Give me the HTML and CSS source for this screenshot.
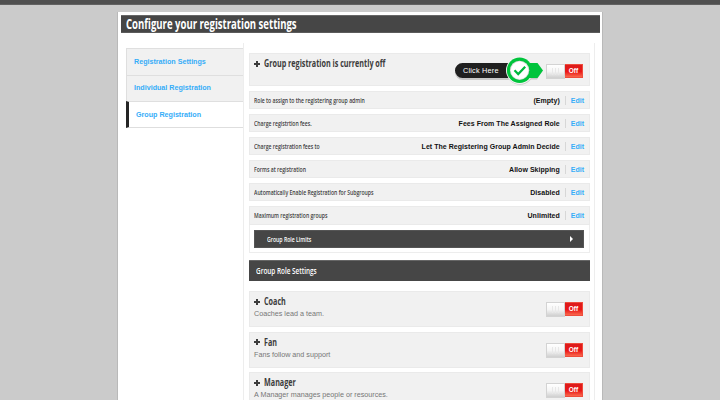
FILE: index.html
```html
<!DOCTYPE html>
<html lang="en">
<head>
<meta charset="utf-8">
<title>Configure your registration settings</title>
<link rel="stylesheet" href="styles.css">
</head>
<body>
<div class="topbar"></div>
<main class="panel">
  <h1 class="title"><span class="narrow">Configure your registration settings</span></h1>
  <div class="columns">
    <nav class="sidebar">
      <a class="tab">Registration Settings</a>
      <a class="tab">Individual Registration</a>
      <a class="tab active">Group Registration</a>
    </nav>
    <section class="content">
      <div class="card status">
        <h2 class="heading"><i class="plus"></i><span class="narrow">Group registration is currently off</span></h2>
        <div class="toggle"><span class="knob"><i></i><i></i><i></i></span><span class="off">Off</span></div>
        <div class="callout">
          <svg width="94" height="32" viewBox="0 0 94 32">
            <g fill="#c8c8c8"><rect x="2" y="9.500" width="60" height="15.500" rx="7.750"/><path d="M66 9h18l5.500 6.500-5.500 9H66z"/><circle cx="67" cy="16.200" r="13.600"/></g>
            <path d="M9.500 8h50v15h-50a7.500 7.500 0 0 1 0-15z" fill="#202020"/>
            <path d="M68 8h16.500l5.500 7.500-5.500 7.500H68z" fill="#00c43c"/>
            <circle cx="66.600" cy="15.300" r="13.600" fill="#f7f7f7"/>
            <path d="M76 8h8v15h-8z" fill="#00c43c"/>
            <circle cx="66.600" cy="15.300" r="12.700" fill="#00c43c"/>
            <circle cx="66.600" cy="15.300" r="9.600" fill="#dedede"/>
            <circle cx="66.600" cy="15.300" r="8.700" fill="#fff"/>
            <path d="M61.500 15.300l3.700 3.800 7-7.400" fill="none" stroke="#00b83c" stroke-width="2.200"/>
          </svg>
          <span class="callout-text">Click Here</span>
        </div>
      </div>
      <div class="card row"><span class="label">Role to assign to the registering group admin</span><b>(Empty)</b><a class="edit">Edit</a></div>
      <div class="card row"><span class="label">Charge registrtion fees.</span><b>Fees From The Assigned Role</b><a class="edit">Edit</a></div>
      <div class="card row"><span class="label">Charge registration fees to</span><b>Let The Registering Group Admin Decide</b><a class="edit">Edit</a></div>
      <div class="card row"><span class="label">Forms at registration</span><b>Allow Skipping</b><a class="edit">Edit</a></div>
      <div class="card row"><span class="label">Automatically Enable Registration for Subgroups</span><b>Disabled</b><a class="edit">Edit</a></div>
      <div class="card row last"><span class="label">Maximum registration groups</span><b>Unlimited</b><a class="edit">Edit</a></div>
      <div class="limits"><div class="limits-bar"><span class="narrow">Group Role Limits</span><i class="arrow"></i></div></div>
      <h2 class="section"><span class="narrow">Group Role Settings</span></h2>
      <div class="card role">
        <div><h3 class="heading"><i class="plus"></i><span class="narrow">Coach</span></h3><p>Coaches lead a team.</p></div>
        <div class="toggle"><span class="knob"><i></i><i></i><i></i></span><span class="off">Off</span></div>
      </div>
      <div class="card role">
        <div><h3 class="heading"><i class="plus"></i><span class="narrow">Fan</span></h3><p>Fans follow and support</p></div>
        <div class="toggle"><span class="knob"><i></i><i></i><i></i></span><span class="off">Off</span></div>
      </div>
      <div class="card role cut">
        <div><h3 class="heading"><i class="plus"></i><span class="narrow">Manager</span></h3><p>A Manager manages people or resources.</p></div>
        <div class="toggle"><span class="knob"><i></i><i></i><i></i></span><span class="off">Off</span></div>
      </div>
    </section>
  </div>
</main>
</body>
</html>
```
FILE: styles.css
```css
* { box-sizing: border-box; }
html, body { height: 400px; overflow: hidden; }
body { margin: 0; background: #cbcbcb; font: 7px/1 "Liberation Sans", Arial, sans-serif; color: #111; }
h1, h2, h3, p { margin: 0; font-weight: normal; }
.topbar { height: 5px; background: #505050; border-bottom: 1px solid #626262; }
.panel { width: 484px; height: 388px; margin: 7px 0 0 118px; padding: 3px 2px 0 3px; background: #fff; box-shadow: -1px 0 #b9b9b9, 1px 0 #b9b9b9; }
.narrow, .label { display: inline-block; white-space: nowrap; font-family: "Open Sans", "Noto Sans", sans-serif; font-weight: 700; transform-origin: 0 50%; }
.title { height: 18px; padding-left: 5px; background: #464646; border-top: 1px solid #666; border-bottom: 1px solid #5b5b5b; color: #fff; line-height: 16px; }
.title .narrow { font-size: 13.500px; transform: scaleX(.708); }
.columns { display: flex; margin: 10px 4px 0 5px; }
.sidebar { width: 117px; height: 110px; padding-top: 5px; flex: none; }
.tab { display: flex; align-items: center; height: 26.500px; padding: 1px 0 0 7px; background: #f1f1f1; border: solid #dfdfdf; border-width: 1px 0 0 1px; color: #35adf8; font-weight: bold; font-size: 7.150px; }
.tab.active { background: #fff; border-left: 3px solid #252525; border-bottom: 1px solid #dedede; height: 27px; padding-top: 2px; }
.content { width: 352px; height: 357px; padding: 10px 4px 0 5px; border: solid #ededed; border-width: 0 1px 0 1px; }
.card { position: relative; display: flex; background: #f1f1f1; border: 1px solid #eaeaea; margin-bottom: 5px; width: 341px; }
.status { height: 33px; padding: 3px 6px 0 4px; justify-content: space-between; }
.heading { display: flex; align-items: center; height: 12px; color: #3c3c3c; }
.heading .narrow { font-size: 10.500px; line-height: 12px; transform: scaleX(.685); }
.plus { width: 6px; height: 6px; margin: 1px 4px 0 0; background: linear-gradient(#3c3c3c, #3c3c3c) 50% 50% / 6px 2px no-repeat, linear-gradient(#3c3c3c, #3c3c3c) 50% 50% / 2px 6px no-repeat; }
.toggle { display: flex; width: 37px; height: 15px; margin-top: 7px; flex: none; }
.knob { display: flex; gap: 2px; justify-content: center; align-items: center; width: 19px; border: 1px solid #d3d3d3; background: linear-gradient(#fff, #f5f5f5 50%, #cfcfcf); }
.knob i { width: 1px; height: 7px; background: #e8e8e8; }
.off { width: 18px; height: 14px; background: linear-gradient(#dc1c1c, #ea1717 55%, #f8684d); border: 1px solid #ef4c3c; border-left: 0; color: #fff; text-align: center; line-height: 12px; font-size: 6.500px; font-weight: bold; }
.callout { position: absolute; left: 203px; top: 1px; width: 94px; height: 32px; }
.callout svg { display: block; }
.callout-text { position: absolute; left: 10px; top: 12px; color: #fff; font-size: 7.300px; letter-spacing: .2px; white-space: nowrap; }
.row { height: 18px; align-items: center; padding: 0 5px 0 4px; }
.label { color: #404040; font-size: 7px; font-weight: 600; transform: scaleX(.73); }
.row b { margin-left: auto; white-space: nowrap; letter-spacing: .04px; }
.edit { margin-left: 5px; padding-left: 5px; line-height: 9px; border-left: 1px solid #d7d7d7; color: #35adf8; font-weight: bold; }
.last { margin-bottom: 0; height: 19px; }
.limits { width: 341px; height: 28px; padding: 5px 5px 5px 4px; border: 1px solid #ededed; border-top: 0; }
.limits-bar { display: flex; align-items: center; justify-content: space-between; height: 18px; padding: 0 10px 0 12px; background: #464646; border: 1px solid #555; color: #fff; }
.limits-bar .narrow { font-size: 7px; font-weight: 600; transform: scaleX(.735); }
.arrow { border: solid transparent; border-width: 3px 0 3px 3px; border-left-color: #fff; }
.section { width: 341px; height: 21px; margin: 7px 0 10px; padding-left: 7px; background: #464646; border-top: 1px solid #666; color: #fff; line-height: 19px; }
.section .narrow { font-size: 8.500px; font-weight: 600; transform: scaleX(.75); }
.role { height: 36px; margin-bottom: 4.500px; padding: 3px 6px 0 4px; justify-content: space-between; }
.role.cut { height: 28px; margin-bottom: 0; border-bottom: 0; }
.role p { margin-top: 3px; color: #777; font-size: 7.200px; }
```
